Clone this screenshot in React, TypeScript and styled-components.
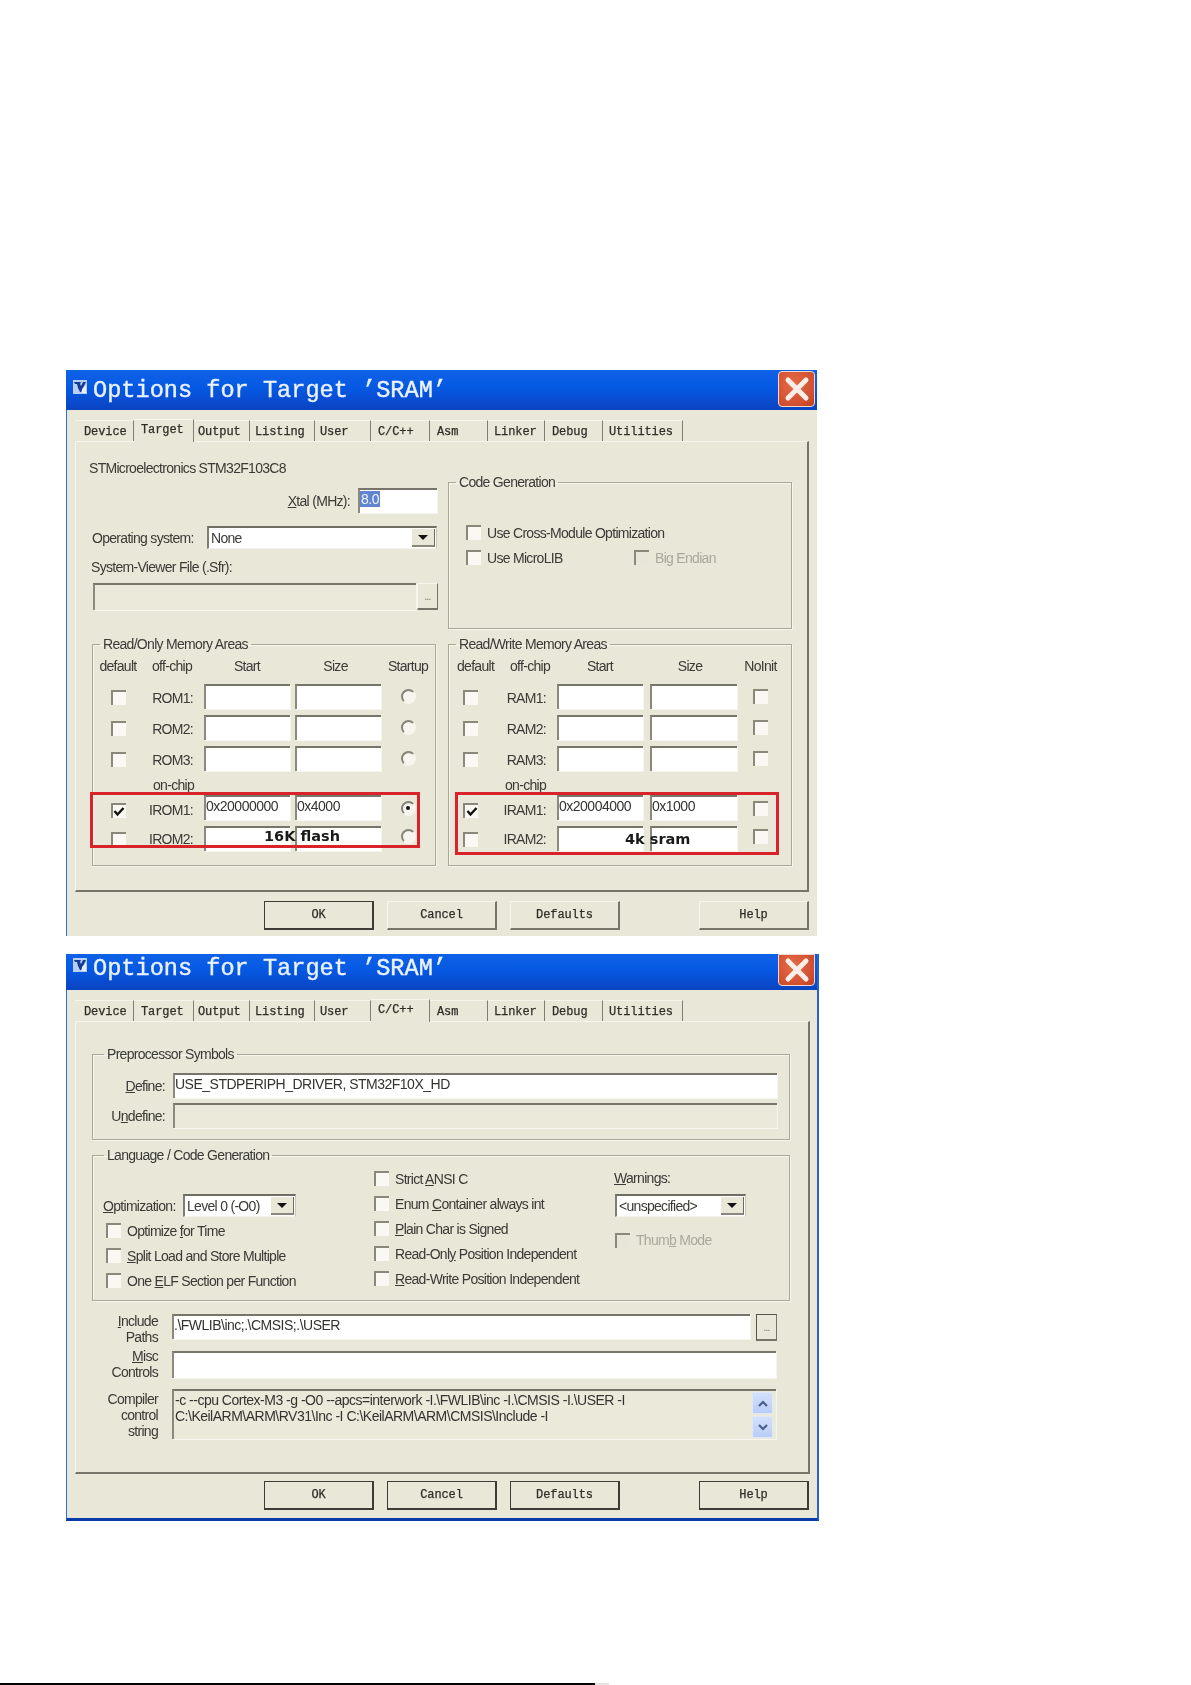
import { ReactNode } from "react";
import styled, { createGlobalStyle } from "styled-components";

const GlobalStyle = createGlobalStyle`
  html, body {
    margin: 0;
    padding: 0;
    background: #ffffff;
  }
  * {
    box-sizing: border-box;
  }
`;

const FACE = "#e9e7d8";
const SHADOW = "#77756a";
const ETCH = "#a9a797";

const Page = styled.div`
  height: 1685px;
  padding-top: 370px;
  display: flex;
  flex-direction: column;
  overflow: hidden;
  font-family: "Liberation Sans", Arial, sans-serif;
  font-size: 14px;
  color: #3a3a36;
  letter-spacing: -0.7px;
`;

const Window = styled.div<{ $h: number; $w: number; $framed?: boolean }>`
  width: ${(p) => p.$w}px;
  height: ${(p) => p.$h}px;
  margin: 0 0 18px 66px;
  background: ${FACE};
  border-left: 1px solid #2f6fd0;
  border-right: ${(p) => (p.$framed ? "2px solid #2a62c4" : "0")};
  border-bottom: ${(p) => (p.$framed ? "3px solid #0a3aa8" : "0")};
  filter: blur(0.35px);
`;

const TitleBar = styled.div<{ $h: number; $short?: boolean }>`
  height: ${(p) => p.$h}px;
  margin-left: -1px;
  padding: ${(p) => (p.$short ? "0 2px 8px 7px" : "0 2px 0 7px")};
  display: flex;
  align-items: center;
  background: linear-gradient(180deg, #0f62e6 0%, #0558e2 45%, #0a49cb 85%, #0a42bf 100%);
`;

const TitleIcon = styled.svg`
  width: 14px;
  height: 14px;
  margin-right: 6px;
  margin-bottom: 6px;
  flex: none;
`;

const TitleText = styled.div`
  flex: 1;
  font-family: "Liberation Mono", monospace;
  font-size: 23.6px;
  letter-spacing: 0;
  color: #eaf2ff;
  -webkit-text-stroke: 0.4px #eaf2ff;
  white-space: nowrap;
`;

const CloseButton = styled.div<{ $short?: boolean }>`
  width: 37px;
  height: ${(p) => (p.$short ? 32 : 36)}px;
  align-self: flex-start;
  margin-top: ${(p) => (p.$short ? 0 : 1)}px;
  border: 1px solid #f1d9d0;
  border-radius: ${(p) => (p.$short ? "0 0 4px 4px" : "4px")};
  background: radial-gradient(circle at 40% 35%, #e66a47, #d04f2e 70%, #b8411f);
  display: flex;
  align-items: center;
  justify-content: center;
  flex: none;
`;

const TabStrip = styled.div`
  display: flex;
  align-items: flex-end;
  height: 31px;
  padding-left: 8px;
`;

const Tab = styled.div<{ $w: number; $active?: boolean; $pad?: number }>`
  width: ${(p) => p.$w}px;
  height: ${(p) => (p.$active ? 23 : 21)}px;
  padding-left: ${(p) => p.$pad ?? 5}px;
  padding-top: ${(p) => (p.$active ? 3 : 4)}px;
  margin-bottom: ${(p) => (p.$active ? -1 : 0)}px;
  position: relative;
  font-family: "Liberation Mono", monospace;
  font-size: 12px;
  letter-spacing: -0.1px;
  line-height: 14px;
  color: #2e2e28;
  -webkit-text-stroke: 0.25px #2e2e28;
  background: ${FACE};
  border-top: 1px solid #f6f5ec;
  border-right: 1px solid #807e72;
`;

const Panel = styled.div<{ $w: number; $h: number }>`
  width: ${(p) => p.$w}px;
  height: ${(p) => p.$h}px;
  margin-left: 8px;
  padding: 17px 0 0 13px;
  border-top: 1px solid #f6f5ec;
  border-left: 1px solid #f6f5ec;
  border-right: 2px solid ${SHADOW};
  border-bottom: 2px solid ${SHADOW};
`;

const TwoColumns = styled.div<{ $bottom?: number }>`
  display: grid;
  grid-template-columns: 359px 344px;
  margin-bottom: ${(p) => p.$bottom ?? 0}px;
`;

const LeftStack = styled.div`
  display: flex;
  flex-direction: column;
`;

const InfoLine = styled.div`
  height: 18px;
  line-height: 18px;
`;

const XtalRow = styled.div`
  display: flex;
  justify-content: flex-end;
  align-items: center;
  gap: 8px;
  margin-top: 11px;
  padding-right: 11px;
`;

const OsRow = styled.div`
  display: flex;
  align-items: center;
  margin-top: 13px;
  padding-left: 3px;
  height: 23px;
`;

const OsLabel = styled.div`
  width: 115px;
`;

const SfrLabel = styled.div`
  height: 16px;
  line-height: 16px;
  margin-top: 10px;
  padding-left: 2px;
`;

const PathRow = styled.div`
  display: flex;
  margin-top: 8px;
  padding-left: 4px;
`;

const Sunken = styled.div<{ $w?: number; $h?: number; $off?: boolean }>`
  width: ${(p) => (p.$w ? `${p.$w}px` : "100%")};
  height: ${(p) => p.$h ?? 25}px;
  flex: none;
  padding: 1px 0 0 0;
  font-size: 14px;
  letter-spacing: -0.5px;
  line-height: 17px;
  white-space: pre;
  color: #333330;
  background: ${(p) => (p.$off ? "#ebe9da" : "#ffffff")};
  border-top: 2px solid #77756a;
  border-left: 2px solid #8b897c;
  box-shadow: 1px 1px 0 #f7f6ee;
`;

const Selected = styled.span`
  background: #5f86cf;
  color: #f2f4fb;
  padding: 0 1px;
`;

const ComboBox = styled.div<{ $w: number; $flush?: boolean }>`
  width: ${(p) => p.$w}px;
  height: 23px;
  flex: none;
  margin-left: ${(p) => (p.$flush ? 1 : 0)}px;
  padding: 1px 1px 1px 2px;
  display: flex;
  align-items: center;
  justify-content: space-between;
  background: #ffffff;
  border-top: 2px solid #706e63;
  border-left: 2px solid #807e71;
  border-right: 1px solid #c7c5b6;
  border-bottom: 1px solid #f5f4ec;
`;

const ComboArrow = styled.div`
  width: 23px;
  height: 18px;
  background: ${FACE};
  border-right: 1px solid #6c6a5f;
  border-bottom: 2px solid #8a887b;
  display: flex;
  align-items: center;
  justify-content: center;

  &::before {
    content: "";
    border-left: 5px solid transparent;
    border-right: 5px solid transparent;
    border-top: 5px solid #111111;
  }
`;

const MoreButton = styled.div<{ $h?: number; $dark?: boolean }>`
  width: 21px;
  height: ${(p) => p.$h ?? 27}px;
  flex: none;
  margin-left: ${(p) => (p.$dark ? 6 : 1)}px;
  background: ${FACE};
  border: 1px solid ${(p) => (p.$dark ? "#55544b" : "#f6f5ec")};
  border-right: 1px solid ${SHADOW};
  border-bottom: 2px solid ${SHADOW};
  font-size: 10px;
  line-height: 26px;
  text-align: center;
  color: #77756a;
`;

const Group = styled.fieldset<{ $w: number; $h: number; $top?: number; $left?: number }>`
  width: ${(p) => p.$w}px;
  height: ${(p) => p.$h}px;
  margin: ${(p) => p.$top ?? 0}px 0 0 ${(p) => p.$left ?? 0}px;
  padding: 0;
  min-width: 0;
  border: 1px solid ${ETCH};
  box-shadow: inset 1px 1px 0 #f6f5ec, 1px 1px 0 #f6f5ec;
`;

const GroupTitle = styled.legend<{ $wide?: boolean }>`
  margin-left: ${(p) => (p.$wide ? 11 : 7)}px;
  padding: 0 3px;
  height: 16px;
  line-height: 16px;
`;

const MemRow = styled.div<{ $cols: string; $h?: number; $top?: number }>`
  display: grid;
  grid-template-columns: ${(p) => p.$cols};
  height: ${(p) => p.$h ?? 25}px;
  margin-top: ${(p) => p.$top ?? 0}px;
  align-items: center;
`;

const HeadCell = styled.div<{ $left?: number }>`
  text-align: center;
  white-space: nowrap;
  padding-left: ${(p) => p.$left ?? 0}px;
`;

const RowLabel = styled.div<{ $nudge?: number }>`
  text-align: right;
  white-space: nowrap;
  margin-top: ${(p) => p.$nudge ?? 0}px;
`;

const OnChipLabel = styled.div<{ $left: number }>`
  padding: 3px 0 0 ${(p) => p.$left}px;
  white-space: nowrap;
`;

const AddrInput = styled(Sunken)`
  justify-self: end;
`;

const Cell = styled.div<{ $nudge?: number }>`
  display: flex;
  justify-content: center;
  margin-top: ${(p) => p.$nudge ?? 0}px;
`;

const OnChipRows = styled.div`
  position: relative;
`;

const RedBox = styled.div<{ $left: number; $w: number; $h: number }>`
  position: absolute;
  left: ${(p) => p.$left}px;
  top: -3px;
  width: ${(p) => p.$w}px;
  height: ${(p) => p.$h}px;
  border: 3px solid #d8232a;
`;

const Note = styled.div<{ $left: number; $top: number }>`
  position: absolute;
  left: ${(p) => p.$left}px;
  top: ${(p) => p.$top}px;
  font-family: "DejaVu Sans", sans-serif;
  font-size: 14.5px;
  font-weight: 700;
  letter-spacing: 0;
  line-height: 18px;
  color: #1a1a1a;
  white-space: nowrap;
`;

const CheckBox = styled.div<{ $off?: boolean }>`
  width: 15px;
  height: 15px;
  flex: none;
  background: ${(p) => (p.$off ? "#e8e6d8" : "#f9f8f2")};
  border-top: 2px solid #8a887b;
  border-left: 2px solid #8a887b;
  display: flex;
  align-items: center;
  justify-content: center;
`;

const Radio = styled.div`
  width: 15px;
  height: 15px;
  border-radius: 50%;
  background: #f6f5ee;
  border: 2px solid transparent;
  border-top-color: #85837a;
  border-left-color: #85837a;
  display: flex;
  align-items: center;
  justify-content: center;
`;

const RadioDot = styled.div`
  width: 4px;
  height: 4px;
  border-radius: 50%;
  background: #111111;
`;

const Option = styled.div<{ $off?: boolean; $h?: number; $indent?: number; $top?: number }>`
  height: ${(p) => p.$h ?? 25}px;
  margin-top: ${(p) => p.$top ?? 0}px;
  padding-left: ${(p) => p.$indent ?? 0}px;
  display: flex;
  align-items: center;
  gap: 6px;
  white-space: nowrap;
  color: ${(p) => (p.$off ? "#aaa89b" : "inherit")};
`;

const CodeGenBody = styled.div`
  padding: 30px 0 0 17px;
`;

const CodeGenRow = styled.div`
  display: flex;
  width: 300px;
`;

const CodeGenCol = styled.div`
  width: 168px;
`;

const ButtonRow = styled.div<{ $top: number }>`
  display: flex;
  gap: 13px;
  margin-top: ${(p) => p.$top}px;
  padding-left: 197px;
`;

const PushButton = styled.div<{ $w?: number; $dark?: boolean; $after?: number }>`
  width: ${(p) => p.$w ?? 110}px;
  height: 29px;
  margin-left: ${(p) => p.$after ?? 0}px;
  background: ${FACE};
  border: 1px solid ${(p) => (p.$dark ? "#3d3c36" : "#f6f5ec")};
  border-right: 2px solid ${(p) => (p.$dark ? "#3d3c36" : SHADOW)};
  border-bottom: 2px solid ${(p) => (p.$dark ? "#3d3c36" : SHADOW)};
  font-family: "Liberation Mono", monospace;
  font-size: 12px;
  letter-spacing: -0.1px;
  line-height: 26px;
  text-align: center;
  color: #2e2e28;
  -webkit-text-stroke: 0.25px #2e2e28;
`;

const FieldRow = styled.div<{ $top?: number }>`
  display: grid;
  grid-template-columns: 72px 604px;
  column-gap: 8px;
  align-items: center;
  margin-top: ${(p) => p.$top ?? 0}px;
`;

const FieldLabel = styled.div`
  text-align: right;
`;

const CompilerColumns = styled.div`
  display: grid;
  grid-template-columns: 271px 240px 1fr;
  padding-left: 10px;
`;

const OptimizationRow = styled.div`
  display: flex;
  align-items: center;
  justify-content: space-between;
  width: 193px;
  margin: 31px 0 1px;
`;

const StackCol = styled.div<{ $top?: number }>`
  padding-top: ${(p) => p.$top ?? 0}px;
`;

const WarnLabel = styled.div`
  height: 16px;
  line-height: 16px;
  margin-bottom: 8px;
`;

const PathGrid = styled.div`
  display: grid;
  grid-template-columns: 69px 1fr;
  column-gap: 14px;
  align-items: center;
  margin-top: 10px;
  row-gap: 5px;
  width: 693px;
`;

const LinesLabel = styled.div<{ $shift?: number }>`
  text-align: right;
  line-height: 16px;
  margin-top: ${(p) => p.$shift ?? 0}px;
  margin-bottom: ${(p) => -(p.$shift ?? 0)}px;
`;

const InputWithButton = styled.div`
  display: flex;
  align-items: flex-start;
`;

const StringBox = styled.div`
  width: 604px;
  height: 50px;
  margin-top: 4px;
  display: flex;
  justify-content: space-between;
  background: #ebe9da;
  border-top: 2px solid #77756a;
  border-left: 2px solid #8b897c;
  box-shadow: 1px 1px 0 #f7f6ee;
  padding: 1px 3px 0 1px;
`;

const StringText = styled.div`
  font-size: 14px;
  letter-spacing: -0.5px;
  line-height: 16px;
  white-space: pre;
  color: #333330;
`;

const ScrollColumn = styled.div`
  display: flex;
  flex-direction: column;
  gap: 2px;
`;

const ScrollButton = styled.div`
  width: 21px;
  height: 22px;
  border-radius: 2px;
  background: linear-gradient(180deg, #d3e0fb, #b9cdf7);
  border: 1px solid #dfe7f8;
  display: flex;
  align-items: center;
  justify-content: center;
`;

const Footer = styled.div`
  margin-top: auto;
  display: flex;
  flex: none;
`;

const FooterRule = styled.div`
  width: 595px;
  height: 2px;
  background: #000000;
`;

const FooterTail = styled.div`
  width: 14px;
  height: 2px;
  background: #e9e2e2;
`;

const TABS: { name: string; w: number; pad?: number }[] = [
  { name: "Device", w: 59, pad: 9 },
  { name: "Target", w: 60, pad: 7 },
  { name: "Output", w: 56, pad: 4 },
  { name: "Listing", w: 65, pad: 5 },
  { name: "User", w: 56, pad: 5 },
  { name: "C/C++", w: 59, pad: 7 },
  { name: "Asm", w: 58, pad: 7 },
  { name: "Linker", w: 57, pad: 6 },
  { name: "Debug", w: 58, pad: 7 },
  { name: "Utilities", w: 80, pad: 6 },
];

const KeilIcon = () => (
  <TitleIcon viewBox="0 0 14 14">
    <rect width="14" height="14" fill="#b9cff3" />
    <path d="M1 2h7l-1 2 1 2 2-4h3L8 12H7L5 8 4 4H2z" fill="#173a96" />
    <path d="M9 9l4-4v8H9z" fill="#e6eefc" />
  </TitleIcon>
);

const CloseIcon = () => (
  <svg width="26" height="26" viewBox="0 0 26 26">
    <path d="M4 4 L22 22 M22 4 L4 22" stroke="#fbeee8" strokeWidth="5" strokeLinecap="round" />
  </svg>
);

const Tick = () => (
  <svg width="12" height="11" viewBox="0 0 12 11">
    <path d="M1.5 5 L4.5 8.5 L10.5 2" fill="none" stroke="#111111" strokeWidth="2.4" />
  </svg>
);

const Chevron = ({ up }: { up?: boolean }) => (
  <svg width="12" height="9" viewBox="0 0 12 9">
    <path d={up ? "M2 7 L6 3 L10 7" : "M2 2 L6 6 L10 2"} fill="none" stroke="#4a5f8c" strokeWidth="2.2" />
  </svg>
);

const Title = ({ h, short }: { h: number; short?: boolean }) => (
  <TitleBar $h={h} $short={short}>
    <KeilIcon />
    <TitleText>Options for Target ’SRAM’</TitleText>
    <CloseButton $short={short}>
      <CloseIcon />
    </CloseButton>
  </TitleBar>
);

const Tabs = ({ active }: { active: string }) => (
  <TabStrip>
    {TABS.map((t) => (
      <Tab key={t.name} $w={t.w} $pad={t.pad} $active={t.name === active}>
        {t.name}
      </Tab>
    ))}
  </TabStrip>
);

const LEFT_COLS = "50px 50px 97px 91px 1fr";
const RIGHT_COLS = "43px 54px 97px 94px 47px";

type MemoryProps = {
  title: string;
  prefix: string;
  cols: string;
  lastHead: string;
  sizeW: number;
  left: number;
  defaultLeft: number;
  offChipLeft: number;
  onChipLeft: number;
  last: (checked: boolean) => ReactNode;
  start: string;
  size: string;
  box: { left: number; w: number; h: number };
  note: { left: number; top: number; text: string };
};

const MemoryGroup = ({
  title,
  prefix,
  cols,
  lastHead,
  sizeW,
  left,
  defaultLeft,
  offChipLeft,
  onChipLeft,
  last,
  start,
  size,
  box,
  note,
}: MemoryProps) => (
  <Group $w={344} $h={230} $left={left}>
    <GroupTitle>{title}</GroupTitle>
    <MemRow $cols={cols} $h={28}>
      <HeadCell $left={defaultLeft}>default</HeadCell>
      <HeadCell $left={offChipLeft}>off-chip</HeadCell>
      <HeadCell $left={11}>Start</HeadCell>
      <HeadCell>Size</HeadCell>
      <HeadCell>{lastHead}</HeadCell>
    </MemRow>
    {[1, 2, 3].map((n) => (
      <MemRow key={n} $cols={cols} $top={n === 1 ? 4 : 6}>
        <Cell $nudge={1}>
          <CheckBox />
        </Cell>
        <RowLabel $nudge={2}>
          {prefix}
          {n}:
        </RowLabel>
        <AddrInput $w={86} />
        <AddrInput $w={sizeW} />
        <Cell>{last(false)}</Cell>
      </MemRow>
    ))}
    <MemRow $cols={cols} $h={24}>
      <span />
      <OnChipLabel $left={onChipLeft}>on-chip</OnChipLabel>
    </MemRow>
    <OnChipRows>
      <MemRow $cols={cols}>
        <Cell $nudge={5}>
          <CheckBox>
            <Tick />
          </CheckBox>
        </Cell>
        <RowLabel $nudge={5}>I{prefix}1:</RowLabel>
        <AddrInput $w={86}>{start}</AddrInput>
        <AddrInput $w={sizeW}>{size}</AddrInput>
        <Cell $nudge={1}>{last(true)}</Cell>
      </MemRow>
      <MemRow $cols={cols} $top={6}>
        <Cell $nudge={1}>
          <CheckBox />
        </Cell>
        <RowLabel>I{prefix}2:</RowLabel>
        <AddrInput $w={86} />
        <AddrInput $w={sizeW} />
        <Cell $nudge={-4}>{last(false)}</Cell>
      </MemRow>
      <RedBox $left={box.left} $w={box.w} $h={box.h} />
      <Note $left={note.left} $top={note.top}>
        {note.text}
      </Note>
    </OnChipRows>
  </Group>
);

const TargetWindow = () => (
  <Window $w={751} $h={566}>
    <Title h={40} />
    <Tabs active="Target" />
    <Panel $w={734} $h={451}>
      <TwoColumns $bottom={7}>
        <LeftStack>
          <InfoLine>STMicroelectronics STM32F103C8</InfoLine>
          <XtalRow>
            <div>
              <u>X</u>tal (MHz):
            </div>
            <Sunken $w={79}>
              <Selected>8.0</Selected>
            </Sunken>
          </XtalRow>
          <OsRow>
            <OsLabel>Operating system:</OsLabel>
            <ComboBox $w={230}>
              None
              <ComboArrow />
            </ComboBox>
          </OsRow>
          <SfrLabel>System-Viewer File (.Sfr):</SfrLabel>
          <PathRow>
            <Sunken $w={323} $h={27} $off />
            <MoreButton>...</MoreButton>
          </PathRow>
        </LeftStack>
        <Group $w={344} $h={155} $top={15}>
          <GroupTitle>Code Generation</GroupTitle>
          <CodeGenBody>
            <Option>
              <CheckBox />
              Use Cross-Module Optimization
            </Option>
            <CodeGenRow>
              <CodeGenCol>
                <Option>
                  <CheckBox />
                  Use MicroLIB
                </Option>
              </CodeGenCol>
              <Option $off>
                <CheckBox $off />
                Big Endian
              </Option>
            </CodeGenRow>
          </CodeGenBody>
        </Group>
      </TwoColumns>
      <TwoColumns>
        <MemoryGroup
          title="Read/Only Memory Areas"
          prefix="ROM"
          cols={LEFT_COLS}
          lastHead="Startup"
          sizeW={86}
          left={3}
          defaultLeft={0}
          offChipLeft={8}
          onChipLeft={10}
          start="0x20000000"
          size="0x4000"
          last={(on) => <Radio>{on && <RadioDot />}</Radio>}
          box={{ left: -3, w: 330, h: 56 }}
          note={{ left: 171, top: 32, text: "16K flash" }}
        />
        <MemoryGroup
          title="Read/Write Memory Areas"
          prefix="RAM"
          cols={RIGHT_COLS}
          lastHead="NoInit"
          sizeW={87}
          left={0}
          defaultLeft={8}
          offChipLeft={18}
          onChipLeft={13}
          start="0x20004000"
          size="0x1000"
          last={() => <CheckBox />}
          box={{ left: 6, w: 324, h: 63 }}
          note={{ left: 176, top: 35, text: "4k sram" }}
        />
      </TwoColumns>
    </Panel>
    <ButtonRow $top={9}>
      <PushButton $dark>OK</PushButton>
      <PushButton>Cancel</PushButton>
      <PushButton>Defaults</PushButton>
      <PushButton $after={66}>Help</PushButton>
    </ButtonRow>
  </Window>
);

const CppWindow = () => (
  <Window $w={753} $h={567} $framed>
    <Title h={36} short />
    <Tabs active="C/C++" />
    <Panel $w={735} $h={453}>
      <Group $w={698} $h={94} $top={7} $left={3}>
        <GroupTitle $wide>Preprocessor Symbols</GroupTitle>
        <FieldRow $top={11}>
          <FieldLabel>
            <u>D</u>efine:
          </FieldLabel>
          <Sunken>USE_STDPERIPH_DRIVER, STM32F10X_HD</Sunken>
        </FieldRow>
        <FieldRow $top={5}>
          <FieldLabel>
            U<u>n</u>define:
          </FieldLabel>
          <Sunken $off />
        </FieldRow>
      </Group>
      <Group $w={698} $h={154} $top={7} $left={3}>
        <GroupTitle $wide>Language / Code Generation</GroupTitle>
        <CompilerColumns>
          <StackCol>
            <OptimizationRow>
              <div>
                <u>O</u>ptimization:
              </div>
              <ComboBox $w={113}>
                Level 0 (-O0)
                <ComboArrow />
              </ComboBox>
            </OptimizationRow>
            <Option $indent={3}>
              <CheckBox />
              <span>
                Optimize <u>f</u>or Time
              </span>
            </Option>
            <Option $indent={3}>
              <CheckBox />
              <span>
                <u>S</u>plit Load and Store Multiple
              </span>
            </Option>
            <Option $indent={3}>
              <CheckBox />
              <span>
                One <u>E</u>LF Section per Function
              </span>
            </Option>
          </StackCol>
          <StackCol $top={3}>
            <Option>
              <CheckBox />
              <span>
                Strict <u>A</u>NSI C
              </span>
            </Option>
            <Option>
              <CheckBox />
              <span>
                Enum <u>C</u>ontainer always int
              </span>
            </Option>
            <Option>
              <CheckBox />
              <span>
                <u>P</u>lain Char is Signed
              </span>
            </Option>
            <Option>
              <CheckBox />
              <span>
                Read-Onl<u>y</u> Position Independent
              </span>
            </Option>
            <Option>
              <CheckBox />
              <span>
                <u>R</u>ead-Write Position Independent
              </span>
            </Option>
          </StackCol>
          <StackCol $top={7}>
            <WarnLabel>
              <u>W</u>arnings:
            </WarnLabel>
            <ComboBox $w={131} $flush>
              &lt;unspecified&gt;
              <ComboArrow />
            </ComboBox>
            <Option $off $indent={1} $h={24} $top={11}>
              <CheckBox $off />
              <span>
                Thum<u>b</u> Mode
              </span>
            </Option>
          </StackCol>
        </CompilerColumns>
      </Group>
      <PathGrid>
        <LinesLabel $shift={2}>
          <u>I</u>nclude
          <br />
          Paths
        </LinesLabel>
        <InputWithButton>
          <Sunken $w={578}>.\FWLIB\inc;.\CMSIS;.\USER</Sunken>
          <MoreButton $dark>...</MoreButton>
        </InputWithButton>
        <LinesLabel>
          <u>M</u>isc
          <br />
          Controls
        </LinesLabel>
        <Sunken $w={604} $h={27} />
        <LinesLabel $shift={3}>
          Compiler
          <br />
          control
          <br />
          string
        </LinesLabel>
        <StringBox>
          <StringText>
            {"-c --cpu Cortex-M3 -g -O0 --apcs=interwork -I.\\FWLIB\\inc -I.\\CMSIS -I.\\USER -I\nC:\\KeilARM\\ARM\\RV31\\Inc -I C:\\KeilARM\\ARM\\CMSIS\\Include -I"}
          </StringText>
          <ScrollColumn>
            <ScrollButton>
              <Chevron up />
            </ScrollButton>
            <ScrollButton>
              <Chevron />
            </ScrollButton>
          </ScrollColumn>
        </StringBox>
      </PathGrid>
    </Panel>
    <ButtonRow $top={7}>
      <PushButton $dark>OK</PushButton>
      <PushButton $dark>Cancel</PushButton>
      <PushButton $dark>Defaults</PushButton>
      <PushButton $dark $after={66}>
        Help
      </PushButton>
    </ButtonRow>
  </Window>
);

export default function App() {
  return (
    <Page>
      <GlobalStyle />
      <TargetWindow />
      <CppWindow />
      <Footer>
        <FooterRule />
        <FooterTail />
      </Footer>
    </Page>
  );
}
